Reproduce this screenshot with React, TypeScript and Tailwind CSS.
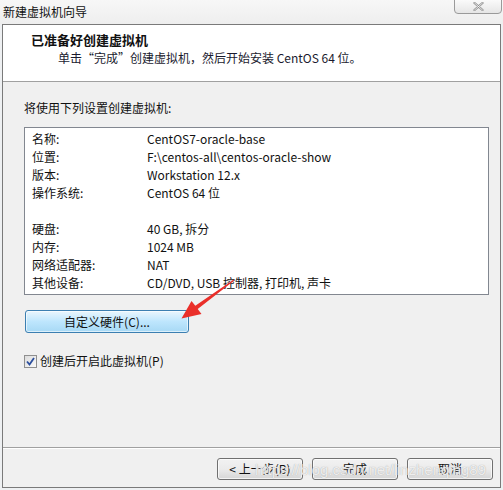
import React from 'react';

const rows: [string, string][] = [
  ['名称:', 'CentOS7-oracle-base'],
  ['位置:', 'F:\\centos-all\\centos-oracle-show'],
  ['版本:', 'Workstation 12.x'],
  ['操作系统:', 'CentOS 64 位'],
  ['', ''],
  ['硬盘:', '40 GB, 拆分'],
  ['内存:', '1024 MB'],
  ['网络适配器:', 'NAT'],
  ['其他设备:', 'CD/DVD, USB 控制器, 打印机, 声卡'],
];

const font = "font-['Microsoft_YaHei','Noto_Sans_CJK_SC',sans-serif]";

function WinButton({ label }: { label: string }) {
  return (
    <div className="w-[86px] h-[22px] flex items-center justify-center rounded-[3px] border border-[#707070] bg-gradient-to-b from-[#f2f2f2] via-[#ebebeb] to-[#d6d6d6] text-[12px] text-[#111] shadow-[inset_0_0_0_1px_rgba(255,255,255,0.7)]">
      {label}
    </div>
  );
}

export default function App() {
  return (
    <div className={`relative w-[503px] h-[490px] bg-[#eef0f2] text-[#111] ${font} overflow-hidden`}>
      {/* title bar */}
      <div className="h-[24px] flex items-center pl-[3px] text-[12px] bg-gradient-to-b from-[#f7f7f7] to-[#eeeeee]">
        新建虚拟机向导
      </div>
      <div className="absolute right-[1px] top-[-1px] w-[48px] h-[15px] rounded-b-[4px] border border-[#9a9a9a] bg-gradient-to-b from-[#fafafa] to-[#e6e6e6] flex items-center justify-center">
        <svg width="11" height="9" viewBox="0 0 11 9">
          <path d="M1.5 1 L9.5 8 M9.5 1 L1.5 8" stroke="#8a8a8a" strokeWidth="2.2" strokeLinecap="round" />
          <path d="M1.5 1 L9.5 8 M9.5 1 L1.5 8" stroke="#ffffff" strokeWidth="0.8" strokeLinecap="round" />
        </svg>
      </div>

      {/* dialog frame */}
      <div className="mx-[2px] w-[499px] h-[464px] border border-[#7a7a7a] flex flex-col bg-[#f0f0f0]">
        {/* header */}
        <div className="h-[57px] bg-white border-b border-[#a0a0a0] pl-[28px] pt-[6px]">
          <div className="text-[13px] font-bold leading-[18px]">已准备好创建虚拟机</div>
          <div className="pl-[27px] text-[12px] leading-[18px] text-[#1a1a2e]">
            单击“完成”创建虚拟机，然后开始安装 CentOS 64 位。
          </div>
        </div>

        {/* body */}
        <div className="flex-1 pl-[21px] pt-[18px]">
          <div className="text-[12px] leading-[16px]">将使用下列设置创建虚拟机:</div>
          <div className="mt-[11px] w-[465px] h-[168px] border border-[#828790] bg-white pt-[2px]">
            {rows.map(([k, v], i) => (
              <div key={i} className="h-[18px] flex items-center text-[12px]">
                <span className="w-[122px] pl-[7px]">{k}</span>
                <span>{v}</span>
              </div>
            ))}
          </div>

          <div className="mt-[15px] ml-[1px] w-[164px] h-[23px] flex items-center justify-center rounded-[3px] border border-[#3c7fb1] bg-gradient-to-b from-[#eaf6fd] via-[#bee6fd] to-[#a7d9f5] text-[12px] shadow-[inset_0_0_0_1px_rgba(255,255,255,0.6)]">
            自定义硬件(C)...
          </div>

          <div className="mt-[19px] flex items-center gap-[3px] text-[12px]">
            <div className="w-[13px] h-[13px] border border-[#8f8f8f] bg-gradient-to-br from-[#dcdcdc] to-[#fafafa] flex items-center justify-center">
              <svg width="9" height="9" viewBox="0 0 9 9">
                <path d="M1 4.5 L3.5 7.5 L8 1" stroke="#2c4f9e" strokeWidth="1.8" fill="none" />
              </svg>
            </div>
            <span>创建后开启此虚拟机(P)</span>
          </div>
        </div>

        {/* footer */}
        <div className="h-[40px] border-t border-[#a0a0a0] shadow-[inset_0_1px_0_#ffffff] flex justify-end items-start pt-[10px] pr-[7px] gap-[9px]">
          <WinButton label="< 上一步(B)" />
          <WinButton label="完成" />
          <WinButton label="取消" />
        </div>
      </div>

      {/* watermark */}
      <div className="absolute left-[255px] top-[459px] text-[15px] font-['Liberation_Sans',sans-serif] text-white/80 [text-shadow:0_0_1px_#9a9a9a] pointer-events-none">
        https://blog.csdn.net/linzhenqing89
      </div>

      {/* red arrow annotation */}
      <svg className="absolute left-0 top-0 pointer-events-none" width="503" height="490">
        <polygon
          points="234.3,280.4 197.7,309.0 201.5,314.0 181.5,318.5 191.5,301.0 195.3,305.8 233.7,279.6"
          fill="#ea2f2a"
        />
      </svg>
    </div>
  );
}
